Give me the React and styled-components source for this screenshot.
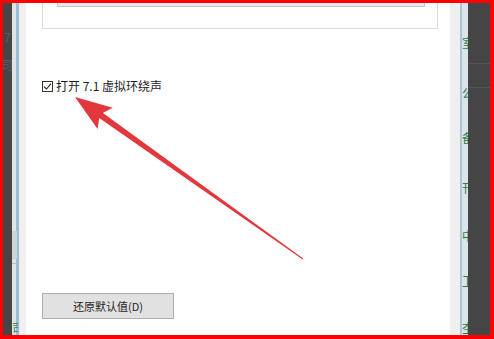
import React from "react";
import styled, { createGlobalStyle } from "styled-components";

const Global = createGlobalStyle`
  html, body { margin: 0; padding: 0; background: #ffffff; }
  body { font-family: "Noto Sans CJK SC", "Liberation Sans", sans-serif; }
`;

const Frame = styled.div`
  position: relative;
  width: 494px;
  height: 339px;
  box-sizing: border-box;
  border-style: solid;
  border-color: #ff0000;
  border-width: 3px 4px 4px 3px;
  display: flex;
  overflow: hidden;
  background: #ffffff;
`;

const DarkStrip = styled.div`
  flex: 0 0 ${(p) => p.$w}px;
  background: #454545;
  display: flex;
  flex-direction: column;
  overflow: hidden;
  position: relative;
`;

const FaintChar = styled.span`
  display: block;
  font-size: 12px;
  line-height: 12px;
  color: #56606a;
  margin-top: ${(p) => p.$mt}px;
  margin-left: ${(p) => p.$ml || 0}px;
  white-space: nowrap;
`;

const Divider = styled.div`
  height: 1px;
  background: #545454;
  margin-top: ${(p) => p.$mt}px;
`;

const PaneEdge = styled.div`
  flex: 0 0 8px;
  display: flex;
  flex-direction: column;
  background: linear-gradient(to right, #dfe3e7 0 4px, #9dbdd4 4px 7px, #e9ecef 7px 8px);
`;

const EdgeBlock = styled.div`
  height: ${(p) => p.$h}px;
  margin-top: ${(p) => p.$mt}px;
  width: 5px;
  background: ${(p) => p.$c};
`;

const EdgeText = styled.div`
  margin-top: auto;
  width: 6px;
  overflow: hidden;
  font-size: 12px;
  line-height: 12px;
  color: #2f8a4c;
  white-space: nowrap;
  margin-bottom: 1px;
`;

const Gutter = styled.div`
  flex: 0 0 ${(p) => p.$w}px;
  background: ${(p) => p.$c};
`;

const Dialog = styled.div`
  flex: 0 0 424px;
  background: #ffffff;
  padding-left: 16px;
  box-sizing: border-box;
  display: flex;
  flex-direction: column;
  align-items: flex-start;
`;

const TopPanel = styled.div`
  width: 396px;
  height: 26px;
  box-sizing: border-box;
  border: 1px solid #dcdcdc;
  border-top: none;
  background: #ffffff;
`;

const ListBox = styled.div`
  margin-left: 14px;
  width: 368px;
  height: 4px;
  box-sizing: border-box;
  background: #ebebeb;
  border: 1px solid #c6c6c6;
  border-top: none;
`;

const CheckRow = styled.label`
  margin-top: 50px;
  display: flex;
  align-items: center;
  gap: 3px;
  font-size: 12px;
  line-height: 14px;
  color: #1e1e1e;
`;

const CheckBox = styled.span`
  width: 11px;
  height: 11px;
  box-sizing: border-box;
  border: 1px solid #333333;
  background: #ffffff;
  display: flex;
  align-items: center;
  justify-content: center;
`;

const Spacer = styled.div`
  flex: 1;
`;

const Button = styled.button`
  width: 132px;
  height: 26px;
  margin-bottom: 16px;
  box-sizing: border-box;
  border: 1px solid #adadad;
  background: #e1e1e1;
  font-family: "Noto Sans CJK SC", "Liberation Sans", sans-serif;
  font-size: 11px;
  color: #1e1e1e;
  padding: 0;
`;

const RightEdge = styled.div`
  flex: 0 0 8px;
  display: flex;
  background: linear-gradient(to right, #a9c7dc 0 2px, #dbe4e9 2px 8px);
`;

const SideChars = styled.div`
  width: 6px;
  margin-left: 2px;
  overflow: hidden;
  display: flex;
  flex-direction: column;
`;

const SideChar = styled.span`
  display: block;
  font-size: 12px;
  line-height: 12px;
  color: #2c7a48;
  margin-top: ${(p) => p.$mt}px;
  white-space: nowrap;
`;

const Overlay = styled.svg`
  position: absolute;
  left: -3px;
  top: -3px;
  width: 494px;
  height: 339px;
  pointer-events: none;
`;

function arrowPoints() {
  const tip = [75, 97];
  const tail = [303, 259];
  const dx = tip[0] - tail[0];
  const dy = tip[1] - tail[1];
  const len = Math.hypot(dx, dy);
  const d = [dx / len, dy / len];
  const p = [-d[1], d[0]];
  const headLen = 37;
  const B = [tip[0] - headLen * d[0], tip[1] - headLen * d[1]];
  const N = [tip[0] - (headLen - 5) * d[0], tip[1] - (headLen - 5) * d[1]];
  const at = (o, s) => [o[0] + s * p[0], o[1] + s * p[1]];
  const pts = [
    tip,
    at(B, 13),
    at(N, 3.2),
    at(tail, 0.5),
    at(tail, -0.5),
    at(N, -3.2),
    at(B, -13),
  ];
  return pts.map((q) => q.map((v) => v.toFixed(1)).join(",")).join(" ");
}

const sideChars = [
  { c: "室", mt: 34 },
  { c: "公", mt: 38 },
  { c: "备", mt: 33 },
  { c: "刊", mt: 38 },
  { c: "中", mt: 36 },
  { c: "卫", mt: 33 },
  { c: "杢", mt: 35 },
];

export default function App() {
  return (
    <>
      <Global />
      <Frame>
        <DarkStrip $w={9}>
          <FaintChar $mt={28} $ml={1}>7</FaintChar>
          <FaintChar $mt={16} $ml={-2}>司</FaintChar>
        </DarkStrip>
        <PaneEdge>
          <EdgeBlock $mt={228} $h={28} $c="#cfd3d6" />
          <EdgeBlock $mt={4} $h={1} $c="#b8c0c6" />
          <EdgeText>司</EdgeText>
        </PaneEdge>
        <Gutter $w={6} $c="#f2eff0" />
        <Dialog>
          <TopPanel>
            <ListBox />
          </TopPanel>
          <CheckRow>
            <CheckBox>
              <svg width="9" height="9" viewBox="0 0 9 9">
                <path d="M1 4.6 L3.5 7 L8 1.6" fill="none" stroke="#222" strokeWidth="1.1" />
              </svg>
            </CheckBox>
            打开 7.1 虚拟环绕声
          </CheckRow>
          <Spacer />
          <Button>还原默认值(D)</Button>
        </Dialog>
        <Gutter $w={10} $c="#efefef" />
        <RightEdge>
          <SideChars>
            {sideChars.map((s, i) => (
              <SideChar key={i} $mt={s.mt}>{s.c}</SideChar>
            ))}
          </SideChars>
        </RightEdge>
        <DarkStrip $w={22}>
          <Divider $mt={60} />
          <Divider $mt={23} />
        </DarkStrip>
        <Overlay viewBox="0 0 494 339">
          <polygon points={arrowPoints()} fill="#e2383c" />
        </Overlay>
      </Frame>
    </>
  );
}
